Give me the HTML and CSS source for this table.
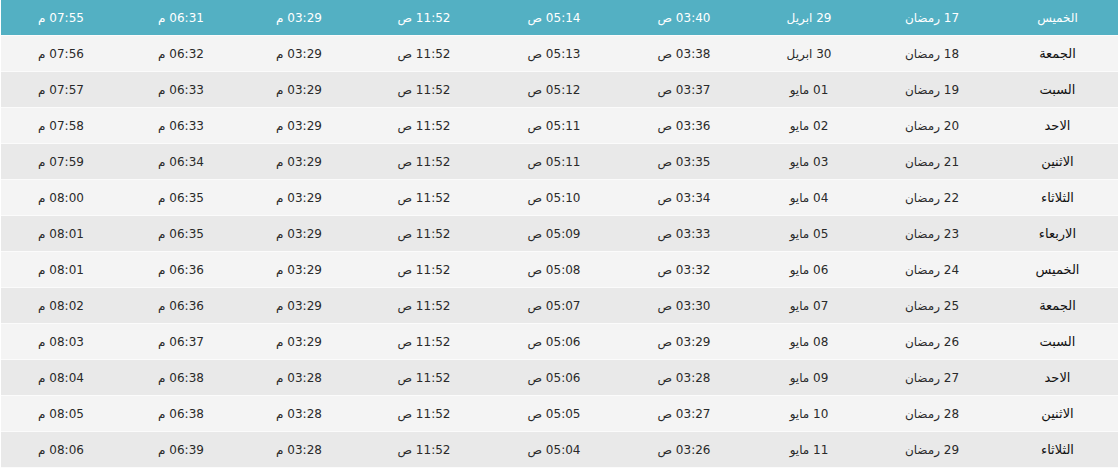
FILE: index.html
```html
<!DOCTYPE html>
<html lang="ar" dir="rtl">
<head>
<meta charset="utf-8">
<link rel="stylesheet" href="styles.css">
</head>
<body>
<table class="times">
<colgroup>
<col class="c-day"><col class="c-hijri"><col class="c-greg"><col class="c-fajr"><col class="c-sunrise"><col class="c-dhuhr"><col class="c-asr"><col class="c-maghrib"><col class="c-isha">
</colgroup>
<tbody>
<tr class="head"><td>الخميس</td><td>17 رمضان</td><td>29 ابريل</td><td>03:40 ص</td><td>05:14 ص</td><td>11:52 ص</td><td>03:29 م</td><td>06:31 م</td><td>07:55 م</td></tr>
<tr><td class="day">الجمعة</td><td>18 رمضان</td><td>30 ابريل</td><td>03:38 ص</td><td>05:13 ص</td><td>11:52 ص</td><td>03:29 م</td><td>06:32 م</td><td>07:56 م</td></tr>
<tr><td class="day">السبت</td><td>19 رمضان</td><td>01 مايو</td><td>03:37 ص</td><td>05:12 ص</td><td>11:52 ص</td><td>03:29 م</td><td>06:33 م</td><td>07:57 م</td></tr>
<tr><td class="day">الاحد</td><td>20 رمضان</td><td>02 مايو</td><td>03:36 ص</td><td>05:11 ص</td><td>11:52 ص</td><td>03:29 م</td><td>06:33 م</td><td>07:58 م</td></tr>
<tr><td class="day">الاثنين</td><td>21 رمضان</td><td>03 مايو</td><td>03:35 ص</td><td>05:11 ص</td><td>11:52 ص</td><td>03:29 م</td><td>06:34 م</td><td>07:59 م</td></tr>
<tr><td class="day">الثلاثاء</td><td>22 رمضان</td><td>04 مايو</td><td>03:34 ص</td><td>05:10 ص</td><td>11:52 ص</td><td>03:29 م</td><td>06:35 م</td><td>08:00 م</td></tr>
<tr><td class="day">الاربعاء</td><td>23 رمضان</td><td>05 مايو</td><td>03:33 ص</td><td>05:09 ص</td><td>11:52 ص</td><td>03:29 م</td><td>06:35 م</td><td>08:01 م</td></tr>
<tr><td class="day">الخميس</td><td>24 رمضان</td><td>06 مايو</td><td>03:32 ص</td><td>05:08 ص</td><td>11:52 ص</td><td>03:29 م</td><td>06:36 م</td><td>08:01 م</td></tr>
<tr><td class="day">الجمعة</td><td>25 رمضان</td><td>07 مايو</td><td>03:30 ص</td><td>05:07 ص</td><td>11:52 ص</td><td>03:29 م</td><td>06:36 م</td><td>08:02 م</td></tr>
<tr><td class="day">السبت</td><td>26 رمضان</td><td>08 مايو</td><td>03:29 ص</td><td>05:06 ص</td><td>11:52 ص</td><td>03:29 م</td><td>06:37 م</td><td>08:03 م</td></tr>
<tr><td class="day">الاحد</td><td>27 رمضان</td><td>09 مايو</td><td>03:28 ص</td><td>05:06 ص</td><td>11:52 ص</td><td>03:28 م</td><td>06:38 م</td><td>08:04 م</td></tr>
<tr><td class="day">الاثنين</td><td>28 رمضان</td><td>10 مايو</td><td>03:27 ص</td><td>05:05 ص</td><td>11:52 ص</td><td>03:28 م</td><td>06:38 م</td><td>08:05 م</td></tr>
<tr><td class="day">الثلاثاء</td><td>29 رمضان</td><td>11 مايو</td><td>03:26 ص</td><td>05:04 ص</td><td>11:52 ص</td><td>03:28 م</td><td>06:39 م</td><td>08:06 م</td></tr>
</tbody>
</table>
</body>
</html>
```
FILE: styles.css
```css
html, body {
  margin: 0;
  padding: 0;
  background: #ffffff;
}
body {
  font-family: "DejaVu Sans", "Noto Sans", sans-serif;
  font-size: 12px;
  color: #2a2a2a;
}
.times {
  width: 1117px;
  border-collapse: collapse;
  table-layout: fixed;
}
.c-day { width: 121px; }
.c-hijri { width: 130px; }
.c-greg { width: 116px; }
.c-fajr { width: 134px; }
.c-sunrise { width: 126px; }
.c-dhuhr { width: 134px; }
.c-asr { width: 116px; }
.c-maghrib { width: 120px; }
.c-isha { width: 120px; }
.times td {
  height: 35px;
  padding: 0;
  text-align: center;
  vertical-align: middle;
  border-bottom: 1px solid #fbfbfb;
  white-space: nowrap;
}
.times tr:nth-child(even) td { background: #f4f4f4; }
.times tr:nth-child(odd) td { background: #e9e9e9; }
.times tr.head td {
  background: #53b0c3;
  color: #ffffff;
}
.times td.day {
  color: #111111;
  font-size: 13px;
}
```
